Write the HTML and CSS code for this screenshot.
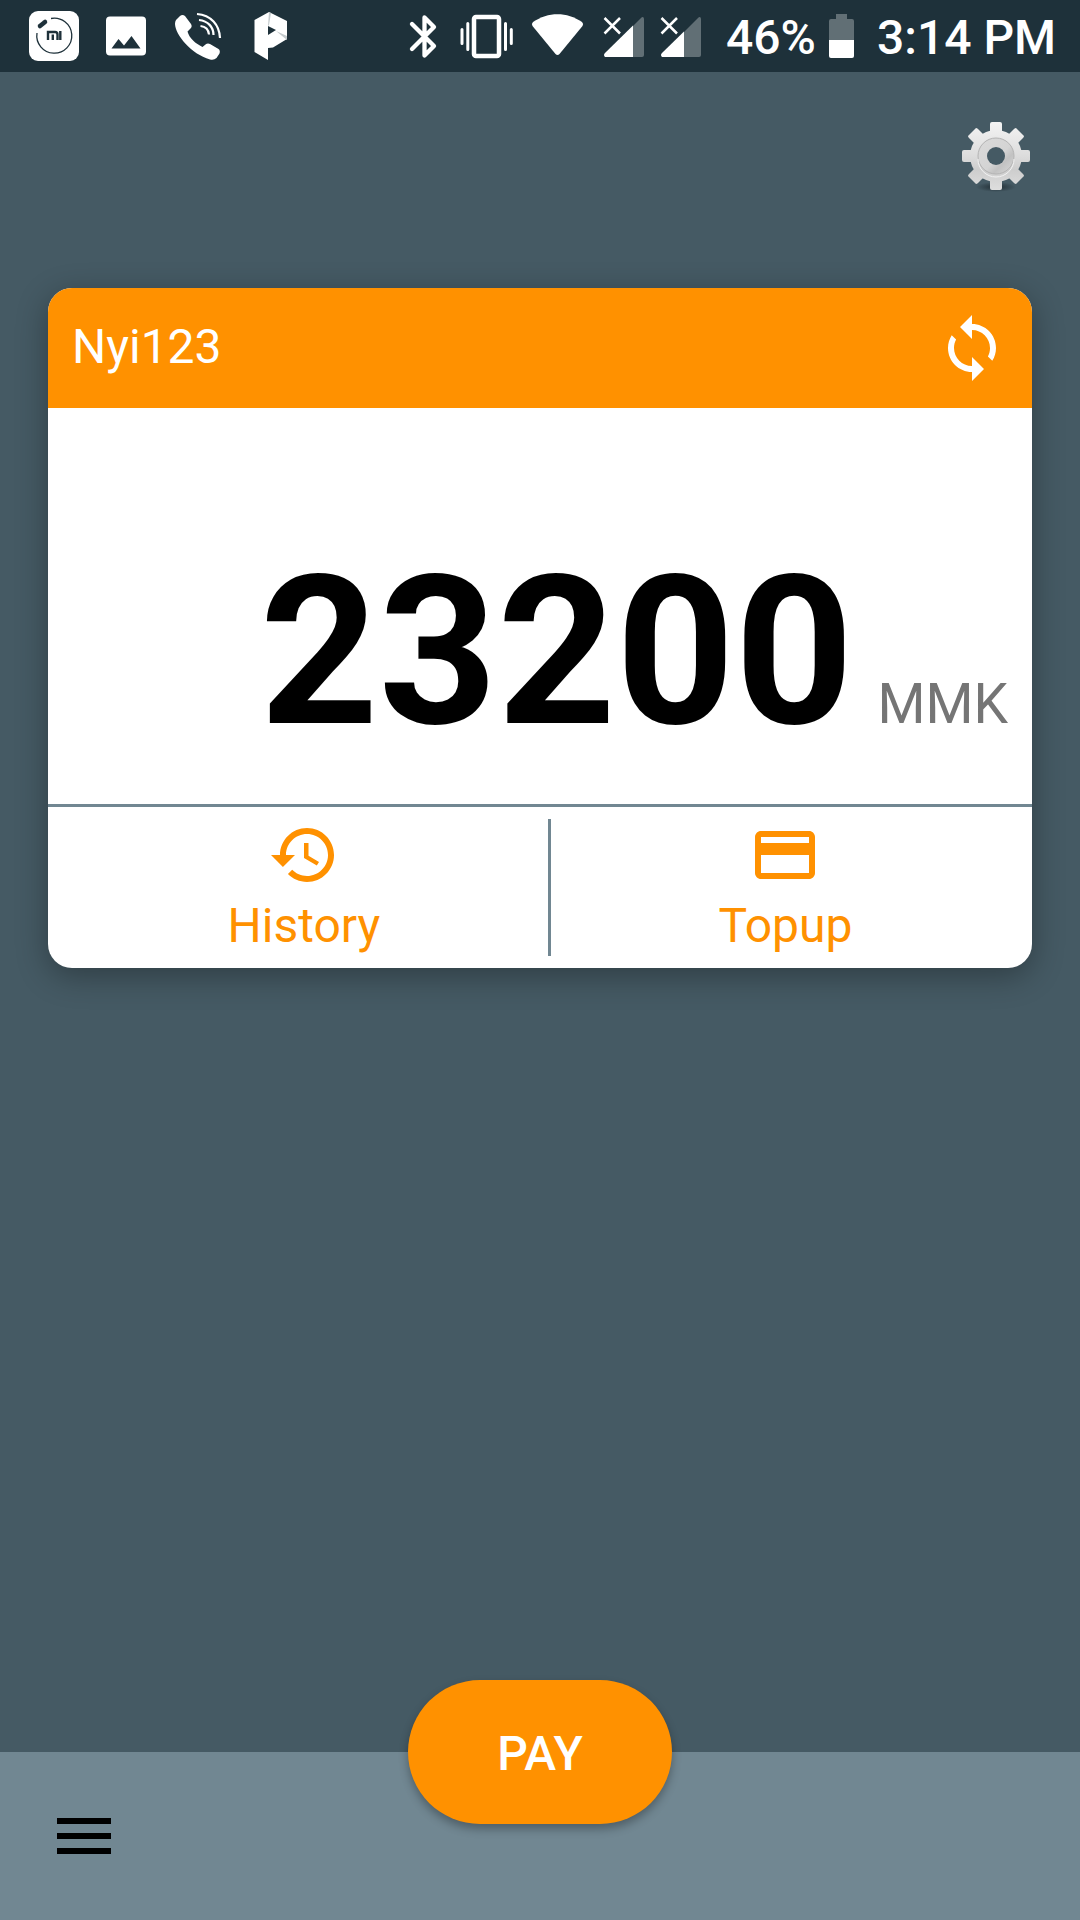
FILE: index.html
```html
<!DOCTYPE html>
<html lang="en">
<head>
<meta charset="utf-8">
<meta name="viewport" content="width=device-width, initial-scale=1">
<title>Wallet</title>
<link rel="stylesheet" href="styles.css">
</head>
<body>
<header class="status">
  <div class="status-group">
    <svg class="status-icon" viewBox="18 0 72 72" aria-label="Mi">
      <rect x="29" y="11" width="50" height="50" rx="9" fill="#fff"/>
      <path d="M51 18.500A17.500 17.500 0 1 1 37 33" fill="none" stroke="#1e313a" stroke-width="1.300"/>
      <path d="M40 26l5-4" stroke="#1e313a" stroke-width="4.500" stroke-linecap="round"/>
      <path d="M48 40v-8h7q2.500 0 2.500 2.500v5.500M52.800 34.500v5.500M60.300 31v9" fill="none" stroke="#1e313a" stroke-width="2.400"/>
    </svg>
    <svg class="status-icon" viewBox="90 0 72 72" aria-label="Picture">
      <path fill="#fff" fill-rule="evenodd" d="M110 16.500h32a4 4 0 0 1 4 4v31a4 4 0 0 1-4 4h-32a4 4 0 0 1-4-4v-31a4 4 0 0 1 4-4zM111.500 48.500h29L131.500 36l-7.500 9.500-5.500-6.500z"/>
    </svg>
    <svg class="status-icon" viewBox="162 0 72 72" aria-label="Call">
      <path fill="#fff" d="M176 20l4-4q2.500-2 5 0l6 8q1.500 2.500-.5 4.500l-3 3c2 7 8 12 15 15.500l3-2.500q2-1.500 4.500-.5l8.500 5q2 1.500 1 4.500l-3 4.500q-2.500 2.500-6.500 1.500C191 54 175.500 35 175 24q0-2.500 1-4z"/>
      <g fill="none" stroke="#fff" stroke-width="2.200"><path d="M197 14c14 1 22.500 11 23 24"/><path d="M199 20c9 1 14.500 7 14.500 15"/><path d="M200.500 26c5 .5 8 3.500 8.500 8.500"/></g>
    </svg>
    <svg class="status-icon" viewBox="234 0 72 72" aria-label="P">
      <path fill="#fff" d="M254.500 20L269 12l18 9v18l-14 8.500-5 .5v12l-13.500-8z"/>
      <path fill="#c4cacc" d="M269 12l2 1-2 12-1 1zM276 31l11 5v4z"/>
      <path fill="#1e313a" d="M268 26l8 4-8 5z"/>
    </svg>
  </div>
  <div class="status-group">
    <svg class="status-bluetooth" viewBox="400 0 48 72" aria-label="Bluetooth">
      <path d="M412 24l22 22-9.500 9.500v-38L434 27 412 49" fill="none" stroke="#fff" stroke-width="4.300" stroke-linecap="round" stroke-linejoin="round"/>
    </svg>
    <svg class="status-icon" viewBox="448 0 72 72" aria-label="Vibrate">
      <rect x="474" y="17" width="25" height="39" rx="2" fill="none" stroke="#fff" stroke-width="4.500"/>
      <path d="M467.800 23.500v26M505.500 23.500v26M462 29.500v14M511.300 29.500v14" stroke="#fff" stroke-width="3" stroke-linecap="round"/>
    </svg>
    <svg class="status-wifi" viewBox="520 0 76 72" aria-label="Wi-Fi">
      <path fill="#fff" d="M533 22c15-10.500 34-10.500 49 0q2 2 .5 4L559.500 54q-2 2-4 0L532.500 26q-1.500-2 .5-4z"/>
    </svg>
    <svg class="status-signal" viewBox="596 0 57 72" aria-label="No signal, SIM 1">
      <path fill="#616f75" d="M644 18.500V55a2 2 0 0 1-2 2h-9V26l8-8q2-2 3 .500z"/><path fill="#fff" d="M633 25.500V57h-28q-2-2 0-4z"/>
      <path d="M604.500 18l15.500 15.500M620 18l-15.500 15.500" stroke="#fff" stroke-width="2.500"/>
    </svg>
    <svg class="status-signal" viewBox="653 0 57 72" aria-label="No signal, SIM 2">
      <path fill="#616f75" d="M701 18.500V55a2 2 0 0 1-2 2h-15V32l14-14q2-2 3 .500z"/><path fill="#fff" d="M684 31.500V57h-22q-2-2 0-4z"/>
      <path d="M661.500 18l15.500 15.500M677 18l-15.500 15.500" stroke="#fff" stroke-width="2.500"/>
    </svg>
    <span class="status-battery-level">46%</span>
    <svg class="status-battery" viewBox="829 0 25 72" aria-label="Battery">
      <path fill="#616f75" d="M836 14h11v5h5q2 0 2 2v19h-25V21q0-2 2-2h5z"/><path fill="#fff" d="M829 40h25v16q0 2-2 2h-21q-2 0-2-2z"/>
    </svg>
    <time>3:14 PM</time>
  </div>
</header>

<main class="screen">
  <div class="toolbar">
    <button class="icon-button" type="button" aria-label="Settings">
      <svg class="icon" viewBox="-36 -36 72 72">
        <defs>
          <linearGradient id="metal" gradientUnits="userSpaceOnUse" x1="0" y1="-34" x2="0" y2="34"><stop offset="0" stop-color="#f4f4f4"/><stop offset=".5" stop-color="#dcdcdc"/><stop offset=".7" stop-color="#cdcdcd"/><stop offset="1" stop-color="#dedede"/></linearGradient>
          <linearGradient id="hub" x1="0" y1="0" x2="1" y2="1"><stop offset="0" stop-color="#dadada"/><stop offset=".55" stop-color="#d4d4d4"/><stop offset=".7" stop-color="#c2c2c2"/><stop offset="1" stop-color="#dadada"/></linearGradient>
          <radialGradient id="ground"><stop offset="0" stop-color="#1c282e" stop-opacity=".9"/><stop offset="1" stop-color="#1c282e" stop-opacity="0"/></radialGradient>
          <mask id="hole"><rect x="-36" y="-36" width="72" height="72" fill="#fff"/><circle r="9" fill="#000"/></mask>
        </defs>
        <ellipse cy="31" rx="20" ry="5" fill="url(#ground)"/>
        <g mask="url(#hole)">
          <g fill="url(#metal)">
            <circle r="26"/>
            <rect x="-6" y="-34" width="12" height="68" rx="2"/>
            <rect x="-34" y="-6" width="68" height="12" rx="2"/>
            <path d="M-28-20l8-8q1 0 2 1l45 45q1 1 1 2l-8 8q-1 0-2-1l-45-45q-1-1-1-2z"/>
            <path d="M28-20l-8-8q-1 0-2 1l-45 45q-1 1-1 2l8 8q1 0 2-1l45-45q1-1 1-2z"/>
          </g>
          <circle r="18" fill="url(#hub)" stroke="#b4b4b4" stroke-width="1"/>
          <path d="M-18 3a18 18 0 0 0 36 0" fill="none" stroke="#f2f2f2"/>
        </g>
      </svg>
    </button>
  </div>

  <section class="card">
    <div class="card-header">
      <h1 class="card-name">Nyi123</h1>
      <button class="icon-button" type="button" aria-label="Refresh">
        <svg class="icon" viewBox="0 0 24 24" fill="currentColor"><path d="M12 4V1L8 5l4 4V6c3.310 0 6 2.690 6 6 0 1.010-.25 1.970-.7 2.800l1.460 1.460C19.540 15.030 20 13.570 20 12c0-4.420-3.580-8-8-8zm0 14c-3.310 0-6-2.690-6-6 0-1.010.25-1.970.7-2.800L5.240 7.740C4.460 8.970 4 10.430 4 12c0 4.420 3.580 8 8 8v3l4-4-4-4v3z"/></svg>
      </button>
    </div>
    <p class="balance"><span class="balance-amount">23200</span><span class="balance-currency">MMK</span></p>
    <div class="actions">
      <button class="action" type="button">
        <svg class="icon" viewBox="0 0 24 24" fill="currentColor"><path d="M13 3c-4.970 0-9 4.030-9 9H1l3.890 3.890.07.14L9 12H6c0-3.870 3.130-7 7-7s7 3.130 7 7-3.130 7-7 7c-1.930 0-3.680-.79-4.940-2.060l-1.420 1.420C8.270 19.990 10.510 21 13 21c4.970 0 9-4.030 9-9s-4.030-9-9-9zm-1 5v5l4.280 2.540.72-1.210-3.500-2.080V8H12z"/></svg>
        <span class="action-label">History</span>
      </button>
      <div class="divider"></div>
      <button class="action" type="button">
        <svg class="icon" viewBox="0 0 24 24" fill="currentColor"><path d="M20 4H4c-1.110 0-1.990.89-1.990 2L2 18c0 1.110.89 2 2 2h16c1.110 0 2-.89 2-2V6c0-1.110-.89-2-2-2zm0 14H4v-6h16v6zm0-10H4V6h16v2z"/></svg>
        <span class="action-label">Topup</span>
      </button>
    </div>
  </section>
</main>

<nav class="bottom-bar">
  <button class="icon-button menu" type="button" aria-label="Menu">
    <svg class="icon" viewBox="0 0 24 24" fill="currentColor"><path d="M3 18h18v-2H3v2zm0-5h18v-2H3v2zm0-7v2h18V6H3z"/></svg>
  </button>
  <button class="pay" type="button">PAY</button>
</nav>
</body>
</html>
```
FILE: styles.css
```css
* {
  box-sizing: border-box;
}

body {
  margin: 0;
  min-height: 100vh;
  display: flex;
  flex-direction: column;
  background: #455a64;
  font-family: Roboto, "Liberation Sans", sans-serif;
  font-size: 48px;
}

button {
  padding: 0;
  border: 0;
  background: none;
  color: inherit;
  font: inherit;
  cursor: pointer;
}

.status {
  display: flex;
  justify-content: space-between;
  height: 72px;
  padding: 0 24px 0 18px;
  background: #1e313a;
  color: #fff;
  font-weight: 500;
  line-height: 76px;
}

.status-group {
  display: flex;
}

.status-group svg {
  height: 72px;
}

.status-icon {
  width: 72px;
}

.status-bluetooth {
  width: 48px;
}

.status-wifi {
  width: 76px;
}

.status-signal {
  width: 57px;
}

.status-battery-level {
  margin-left: 16px;
}

.status-battery {
  width: 25px;
  margin: 0 23px 0 13px;
}

.screen {
  flex: 1;
  padding: 48px;
}

.toolbar {
  display: flex;
  justify-content: flex-end;
  margin-bottom: 96px;
}

.icon-button {
  width: 72px;
  height: 72px;
}

.icon {
  display: block;
  width: 72px;
  height: 72px;
}

.card {
  overflow: hidden;
  border-radius: 24px;
  background: #fff;
  box-shadow: 0 8px 32px rgba(0, 0, 0, 0.32);
}

.card-header {
  display: flex;
  align-items: center;
  justify-content: space-between;
  height: 120px;
  padding: 0 24px;
  background: #ff9100;
  color: #fff;
}

.card-name {
  margin: 0;
  padding-bottom: 2px;
  font-size: 48px;
  font-weight: 400;
  line-height: 56px;
}

.balance {
  display: flex;
  align-items: baseline;
  justify-content: flex-end;
  gap: 24px;
  margin: 0;
  padding: 123px 24px 30px;
}

.balance-amount {
  color: #000;
  font-size: 207px;
  font-weight: 700;
  line-height: 243px;
}

.balance-currency {
  color: #757575;
  font-size: 55px;
  line-height: 64px;
}

.actions {
  display: flex;
  padding: 12px;
  border-top: 3px solid #718792;
  color: #ff9100;
}

.action {
  display: flex;
  flex: 1 1 auto;
  flex-direction: column;
  align-items: center;
}

.action-label {
  padding-top: 4px;
  line-height: 61px;
}

.divider {
  width: 3px;
  background: #718792;
}

.bottom-bar {
  position: relative;
  height: 168px;
  padding: 48px;
  background: #718792;
}

.menu {
  color: #000;
}

.pay {
  position: absolute;
  top: -72px;
  left: calc(50% - 132px);
  width: 264px;
  height: 144px;
  padding-top: 2px;
  border-radius: 72px;
  background: #ff9100;
  box-shadow: 0 5px 10px rgba(0, 0, 0, 0.3);
  color: #fff;
  font-weight: 500;
}
```
